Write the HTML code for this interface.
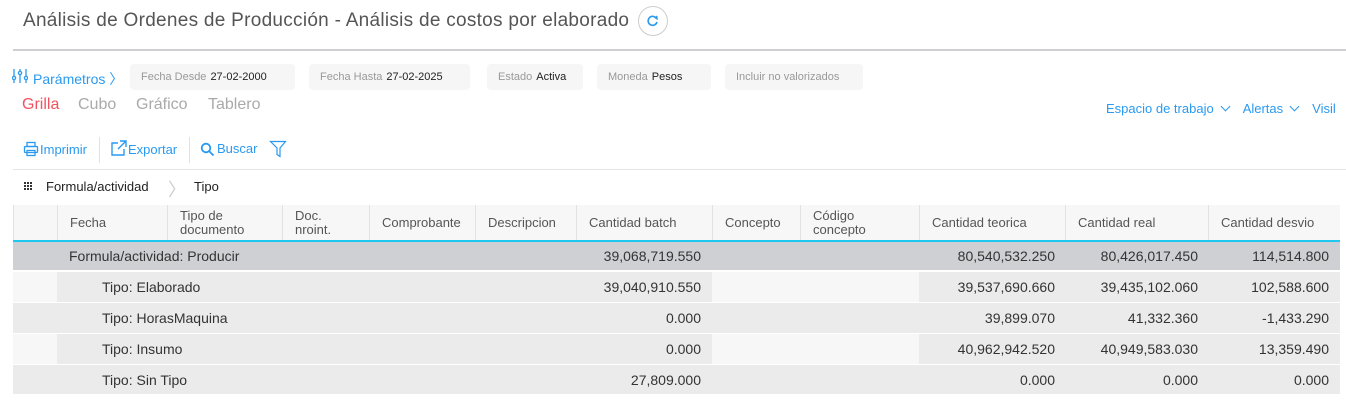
<!DOCTYPE html>
<html><head><meta charset="utf-8"><style>
*{box-sizing:border-box;margin:0;padding:0}
body{width:1346px;height:403px;overflow:hidden;background:#fff;font-family:"Liberation Sans",sans-serif;position:relative;color:#333}
.a{position:absolute;white-space:nowrap}
.blue{color:#2a9af0}
.pill{position:absolute;top:64px;height:26px;background:#f6f6f6;border-radius:4px;font-size:11px;line-height:26px;padding-left:11px;color:#999}
.pill b{font-weight:normal;color:#222;margin-left:4px}
.hd{position:absolute;top:205px;height:35px;font-size:13px;color:#555;border-left:1px solid #e2e2e2;padding-left:12px;line-height:14px;display:flex;align-items:center;background:#f7f7f7}
.row{position:absolute;left:13px;width:1327px;background:#ebebeb;font-size:14px;color:#333}
.c{position:absolute;top:0;height:100%;display:flex;align-items:center}
.r{justify-content:flex-end}
.ch{display:inline-block;width:7px;height:7px;border-right:1.2px solid #2a9af0;border-bottom:1.2px solid #2a9af0;transform:rotate(45deg);margin:0 14px 3px 8px}
</style></head><body>
<div class="a" style="left:23px;top:10px;font-size:19px;color:#555;letter-spacing:0.28px">Análisis de Ordenes de Producción - Análisis de costos por elaborado</div>
<div class="a" style="left:638px;top:6px;width:30px;height:30px;border:1px solid #ccc;border-radius:50%"><svg width="28" height="28" viewBox="0 0 28 28"><path d="M17.5 11.5A4.5 4.5 0 1 0 18 15" fill="none" stroke="#2a9af0" stroke-width="1.6"/><path d="M15.5 10l2.5 1.8-.3-3" fill="none" stroke="#2a9af0" stroke-width="1.4"/></svg></div>
<div class="a" style="left:13px;top:49px;width:1333px;height:2px;background:#cfcfd3"></div>
<svg class="a" style="left:12px;top:68px" width="16" height="16" viewBox="0 0 16 16" stroke="#2a9af0" stroke-width="1.3" fill="none"><path d="M2 1v14M8 1v14M14 1v14"/><circle cx="2" cy="10" r="1.6" fill="#fff"/><circle cx="8" cy="5" r="1.6" fill="#fff"/><circle cx="14" cy="10" r="1.6" fill="#fff"/></svg>
<div class="a blue" style="left:33px;top:69px;font-size:14px">Parámetros 〉</div>
<div class="pill" style="left:130px;width:165px">Fecha Desde<b>27-02-2000</b></div>
<div class="pill" style="left:309px;width:161px">Fecha Hasta<b>27-02-2025</b></div>
<div class="pill" style="left:487px;width:96px">Estado<b>Activa</b></div>
<div class="pill" style="left:597px;width:114px">Moneda<b>Pesos</b></div>
<div class="pill" style="left:725px;width:138px">Incluir no valorizados</div>
<div class="a" style="left:22px;top:96px;font-size:16px;color:#f2525e">Grilla</div>
<div class="a" style="left:78px;top:96px;font-size:16px;color:#aaa">Cubo</div>
<div class="a" style="left:136px;top:96px;font-size:16px;color:#aaa">Gráfico</div>
<div class="a" style="left:208px;top:96px;font-size:16px;color:#aaa">Tablero</div>
<div class="a blue" style="left:1106px;top:101px;font-size:13px">Espacio de trabajo<span class="ch"></span>Alertas<span class="ch"></span>Visil</div>
<svg class="a" style="left:23px;top:141px" width="16" height="16" viewBox="0 0 16 16" stroke="#2a9af0" stroke-width="1.3" fill="none"><rect x="4" y="1.5" width="8" height="4"/><rect x="1.5" y="5.5" width="13" height="6" rx="1"/><rect x="4" y="9.5" width="8" height="5"/></svg>
<div class="a blue" style="left:40px;top:142px;font-size:13px">Imprimir</div>
<div class="a" style="left:99px;top:137px;width:1px;height:26px;background:#e2e2e2"></div>
<svg class="a" style="left:110px;top:140px" width="17" height="17" viewBox="0 0 17 17" stroke="#2a9af0" stroke-width="1.4" fill="none"><path d="M8 3H2v12h12V9"/><path d="M10 1h6v6M16 1L8 9"/></svg>
<div class="a blue" style="left:128px;top:142px;font-size:13px">Exportar</div>
<div class="a" style="left:189px;top:137px;width:1px;height:26px;background:#e2e2e2"></div>
<svg class="a" style="left:200px;top:142px" width="15" height="15" viewBox="0 0 15 15" stroke="#2a9af0" stroke-width="1.8" fill="none"><circle cx="6" cy="6" r="4.3"/><path d="M9 9l4.5 4.5"/></svg>
<div class="a blue" style="left:217px;top:141px;font-size:13px">Buscar</div>
<svg class="a" style="left:269px;top:140px" width="18" height="18" viewBox="0 0 18 18" stroke="#2a9af0" stroke-width="1.2" fill="none"><path d="M1.5 1.5h15L11 8v8.5l-3-2V8z"/></svg>
<div class="a" style="left:13px;top:169px;width:1333px;height:1px;background:#e4e4e4"></div>
<svg class="a" style="left:24px;top:182px" width="9" height="9" viewBox="0 0 9 9" fill="#333"><rect x="0" y="0" width="2" height="2"/><rect x="3" y="0" width="2" height="2"/><rect x="6" y="0" width="2" height="2"/><rect x="0" y="3" width="2" height="2"/><rect x="3" y="3" width="2" height="2"/><rect x="6" y="3" width="2" height="2"/><rect x="0" y="6" width="2" height="2"/><rect x="3" y="6" width="2" height="2"/><rect x="6" y="6" width="2" height="2"/></svg>
<div class="a" style="left:46px;top:179px;font-size:13px;color:#222">Formula/actividad</div>
<div class="a" style="left:168px;top:176px;font-size:18px;color:#ccc">〉</div>
<div class="a" style="left:194px;top:179px;font-size:13px;color:#222">Tipo</div>
<div class="hd" style="left:13px;width:44px"></div>
<div class="hd" style="left:57px;width:110px">Fecha</div>
<div class="hd" style="left:167px;width:115px">Tipo de<br>documento</div>
<div class="hd" style="left:282px;width:87px">Doc.<br>nroint.</div>
<div class="hd" style="left:369px;width:106px">Comprobante</div>
<div class="hd" style="left:475px;width:101px">Descripcion</div>
<div class="hd" style="left:576px;width:136px">Cantidad batch</div>
<div class="hd" style="left:712px;width:88px">Concepto</div>
<div class="hd" style="left:800px;width:119px">Código<br>concepto</div>
<div class="hd" style="left:919px;width:146px">Cantidad teorica</div>
<div class="hd" style="left:1065px;width:143px">Cantidad real</div>
<div class="hd" style="left:1208px;width:132px">Cantidad desvio</div>
<div class="a" style="left:13px;top:240px;width:1327px;height:2px;background:#1ec8f0"></div>

<div class="row" style="top:242px;height:28px;background:#cfd0d4">
<div class="c" style="left:56px">Formula/actividad: Producir</div>
<div class="c r" style="right:639px">39,068,719.550</div>
<div class="c r" style="right:285px">80,540,532.250</div>
<div class="c r" style="right:142px">80,426,017.450</div>
<div class="c r" style="right:11px">114,514.800</div></div>

<div class="row" style="top:272px;height:30px">
<div class="c" style="left:0;width:44px;background:#f7f7f7"></div>
<div class="c" style="left:699px;width:207px;background:#f7f7f7"></div>
<div class="c" style="left:89px">Tipo: Elaborado</div>
<div class="c r" style="right:639px">39,040,910.550</div>
<div class="c r" style="right:285px">39,537,690.660</div>
<div class="c r" style="right:142px">39,435,102.060</div>
<div class="c r" style="right:11px">102,588.600</div></div>

<div class="row" style="top:303px;height:30px">
<div class="c" style="left:89px">Tipo: HorasMaquina</div>
<div class="c r" style="right:639px">0.000</div>
<div class="c r" style="right:285px">39,899.070</div>
<div class="c r" style="right:142px">41,332.360</div>
<div class="c r" style="right:11px">-1,433.290</div></div>

<div class="row" style="top:334px;height:30px">
<div class="c" style="left:0;width:44px;background:#f7f7f7"></div>
<div class="c" style="left:699px;width:207px;background:#f7f7f7"></div>
<div class="c" style="left:89px">Tipo: Insumo</div>
<div class="c r" style="right:639px">0.000</div>
<div class="c r" style="right:285px">40,962,942.520</div>
<div class="c r" style="right:142px">40,949,583.030</div>
<div class="c r" style="right:11px">13,359.490</div></div>

<div class="row" style="top:365px;height:29px">
<div class="c" style="left:89px">Tipo: Sin Tipo</div>
<div class="c r" style="right:639px">27,809.000</div>
<div class="c r" style="right:285px">0.000</div>
<div class="c r" style="right:142px">0.000</div>
<div class="c r" style="right:11px">0.000</div></div>
</body></html>
